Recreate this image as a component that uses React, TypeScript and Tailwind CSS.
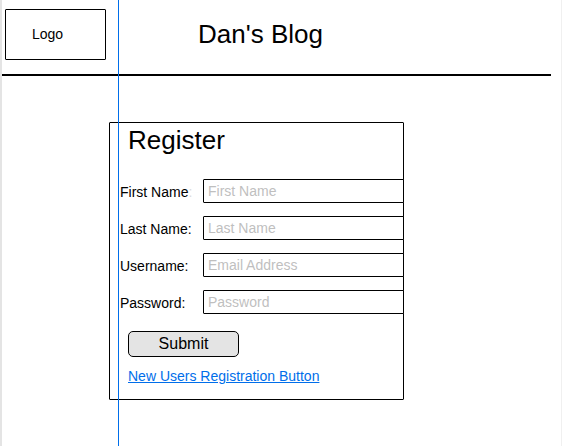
const fields = [
  { id: "first-name", label: "First Name", placeholder: "First Name", type: "text", fadedColon: true },
  { id: "last-name", label: "Last Name:", placeholder: "Last Name", type: "text" },
  { id: "username", label: "Username:", placeholder: "Email Address", type: "text" },
  { id: "password", label: "Password:", placeholder: "Password", type: "password" },
];

function Header() {
  return (
    <header className="mr-2.5 flex items-center border-b-2 border-black pt-[9px] pb-3.5 pl-[3px]">
      <div className="flex h-[51px] w-[101px] shrink-0 items-center rounded-[1px] border border-black pb-0.5 pl-[26px] text-sm">
        Logo
      </div>
      <h1 className="ml-[92px] pb-0.5 text-[26px] leading-9">Dan&apos;s Blog</h1>
    </header>
  );
}

function RegisterForm() {
  return (
    <form
      className="mt-[46px] ml-[107px] w-full max-w-[295px] rounded-[1px] border border-black pb-[13px]"
      onSubmit={(event) => event.preventDefault()}
    >
      <h2 className="pl-[18px] text-[26px] leading-[34px]">Register</h2>
      <div className="mt-[22px] flex flex-col gap-[13px] pl-2.5">
        {fields.map((field) => (
          <div key={field.id} className="-mr-px flex h-6 items-center">
            <label htmlFor={field.id} className="w-[83px] shrink-0 pt-0.5 text-sm whitespace-nowrap">
              {field.label}
              {field.fadedColon && <span className="text-[#dcdcdc]">:</span>}
            </label>
            <input
              id={field.id}
              type={field.type}
              placeholder={field.placeholder}
              className="h-6 min-w-0 flex-1 rounded-[1px] border border-black bg-white px-1 text-sm placeholder:text-[#bfbfbf] focus:outline-none"
            />
          </div>
        ))}
      </div>
      <div className="mt-[17px] flex flex-col items-start gap-[9px] pl-[18px]">
        <button
          type="submit"
          className="h-[26px] w-[111px] rounded-[5px] border border-black bg-[#e4e4e4] text-base leading-6"
        >
          Submit
        </button>
        <a href="#register" className="text-sm text-[#006eea] underline">
          New Users Registration Button
        </a>
      </div>
    </form>
  );
}

export default function App() {
  return (
    <div className="relative min-h-screen border-r border-l-2 border-r-[#f0f0f0] border-l-[#e4e4e4] bg-white font-['Liberation_Sans',Arial,sans-serif] text-black">
      <Header />
      <main>
        <RegisterForm />
      </main>
      <div aria-hidden="true" className="pointer-events-none absolute inset-y-0 left-[116px] w-px bg-[#006eea]" />
    </div>
  );
}
